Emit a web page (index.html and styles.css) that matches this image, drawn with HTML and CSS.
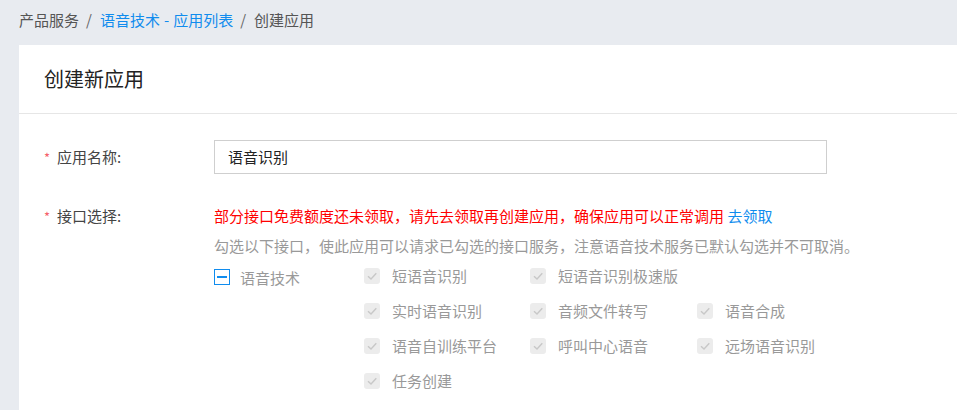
FILE: index.html
```html
<!DOCTYPE html>
<html lang="zh-CN">
<head>
<meta charset="utf-8">
<title>创建应用</title>
<link rel="stylesheet" href="styles.css">
</head>
<body>
<div class="page">
  <div class="breadcrumb">
    <span class="crumb">产品服务</span><span class="sep">/</span><a class="crumb link">语音技术<span class="dash">-</span>应用列表</a><span class="sep">/</span><span class="crumb">创建应用</span>
  </div>
  <div class="card">
    <div class="card-header">创建新应用</div>
    <div class="card-body">
      <div class="form-row row-name">
        <div class="label"><span class="star">*</span>应用名称:</div>
        <div class="field">
          <div class="input">语音识别</div>
        </div>
      </div>
      <div class="form-row row-api">
        <div class="label label-api"><span class="star">*</span>接口选择:</div>
        <div class="field">
          <div class="warn">部分接口免费额度还未领取，请先去领取再创建应用，确保应用可以正常调用 <a class="link">去领取</a></div>
          <div class="hint">勾选以下接口，使此应用可以请求已勾选的接口服务，注意语音技术服务已默认勾选并不可取消。</div>
          <div class="group">
            <div class="group-head">
              <span class="box box-minus"><span class="bar"></span></span>
              <span class="group-name">语音技术</span>
            </div>
            <div class="items">
              <div class="item"><span class="box box-dis"><svg viewBox="0 0 16 16" width="16" height="16"><path d="M4 8.2 L7 11 L12.3 5.2" fill="none" stroke="#c8c8c8" stroke-width="1.4"/></svg></span><span class="item-text">短语音识别</span></div>
              <div class="item"><span class="box box-dis"><svg viewBox="0 0 16 16" width="16" height="16"><path d="M4 8.2 L7 11 L12.3 5.2" fill="none" stroke="#c8c8c8" stroke-width="1.4"/></svg></span><span class="item-text">短语音识别极速版</span></div>
              <div class="item empty"></div>
              <div class="item"><span class="box box-dis"><svg viewBox="0 0 16 16" width="16" height="16"><path d="M4 8.2 L7 11 L12.3 5.2" fill="none" stroke="#c8c8c8" stroke-width="1.4"/></svg></span><span class="item-text">实时语音识别</span></div>
              <div class="item"><span class="box box-dis"><svg viewBox="0 0 16 16" width="16" height="16"><path d="M4 8.2 L7 11 L12.3 5.2" fill="none" stroke="#c8c8c8" stroke-width="1.4"/></svg></span><span class="item-text">音频文件转写</span></div>
              <div class="item"><span class="box box-dis"><svg viewBox="0 0 16 16" width="16" height="16"><path d="M4 8.2 L7 11 L12.3 5.2" fill="none" stroke="#c8c8c8" stroke-width="1.4"/></svg></span><span class="item-text">语音合成</span></div>
              <div class="item"><span class="box box-dis"><svg viewBox="0 0 16 16" width="16" height="16"><path d="M4 8.2 L7 11 L12.3 5.2" fill="none" stroke="#c8c8c8" stroke-width="1.4"/></svg></span><span class="item-text">语音自训练平台</span></div>
              <div class="item"><span class="box box-dis"><svg viewBox="0 0 16 16" width="16" height="16"><path d="M4 8.2 L7 11 L12.3 5.2" fill="none" stroke="#c8c8c8" stroke-width="1.4"/></svg></span><span class="item-text">呼叫中心语音</span></div>
              <div class="item"><span class="box box-dis"><svg viewBox="0 0 16 16" width="16" height="16"><path d="M4 8.2 L7 11 L12.3 5.2" fill="none" stroke="#c8c8c8" stroke-width="1.4"/></svg></span><span class="item-text">远场语音识别</span></div>
              <div class="item"><span class="box box-dis"><svg viewBox="0 0 16 16" width="16" height="16"><path d="M4 8.2 L7 11 L12.3 5.2" fill="none" stroke="#c8c8c8" stroke-width="1.4"/></svg></span><span class="item-text">任务创建</span></div>
            </div>
          </div>
        </div>
      </div>
    </div>
  </div>
</div>
</body>
</html>
```

FILE: styles.css
```css
* { box-sizing: border-box; }
html, body {
  margin: 0;
  padding: 0;
  background: #e8ebf0;
  font-family: "Noto Sans CJK SC", "Microsoft YaHei", sans-serif;
  font-size: 15px;
  color: #333;
  overflow: hidden;
}
.page {
  padding-left: 19px;
}
.breadcrumb {
  height: 45px;
  line-height: 40px;
  color: #555;
  white-space: nowrap;
}
.sep {
  display: inline-block;
  padding: 0 8px 0 7px;
  color: #666;
}
.dash {
  display: inline-block;
  padding: 0 4px;
}
.link {
  color: #108cee;
  cursor: pointer;
}
.card {
  background: #fff;
  min-height: 400px;
}
.card-header {
  height: 69px;
  line-height: 68px;
  padding-left: 25px;
  font-size: 20px;
  color: #222;
  border-bottom: 1px solid #e6e6e6;
}
.card-body {
  padding: 26px 0 0 25px;
}
.form-row {
  display: flex;
}
.label {
  width: 170px;
  flex: none;
  color: #444;
  white-space: nowrap;
}
.row-name .label {
  line-height: 34px;
}
.star {
  display: inline-block;
  width: 13px;
  color: #f5606a;
  font-size: 13px;
}
.input {
  width: 613px;
  height: 34px;
  border: 1px solid #cfcfcf;
  line-height: 32px;
  padding-left: 13px;
  color: #222;
}
.row-api {
  margin-top: 31px;
}
.label-api {
  line-height: 20px;
}
.warn {
  line-height: 20px;
  color: #f00;
  white-space: nowrap;
}
.hint {
  margin-top: 10px;
  line-height: 20px;
  color: #999;
  white-space: nowrap;
}
.group {
  display: flex;
  margin-top: 2px;
}
.group-head {
  width: 150px;
  flex: none;
  height: 35px;
  padding-top: 3px;
  display: flex;
  align-items: center;
}
.group-name {
  color: #999;
  margin-left: 10px;
}
.box {
  display: inline-flex;
  width: 16px;
  height: 16px;
  flex: none;
  align-items: center;
  justify-content: center;
}
.box-minus {
  border: 1px solid #108cee;
}
.bar {
  width: 10px;
  height: 2px;
  background: #108cee;
}
.box-dis {
  background: #ececec;
  border-radius: 3px;
}
.box-dis svg {
  display: block;
}
.items {
  display: grid;
  grid-template-columns: 166px 167px 166px;
  grid-auto-rows: 35px;
}
.item {
  display: flex;
  align-items: center;
  white-space: nowrap;
}
.item-text {
  margin-left: 12px;
  color: #999;
}
```
